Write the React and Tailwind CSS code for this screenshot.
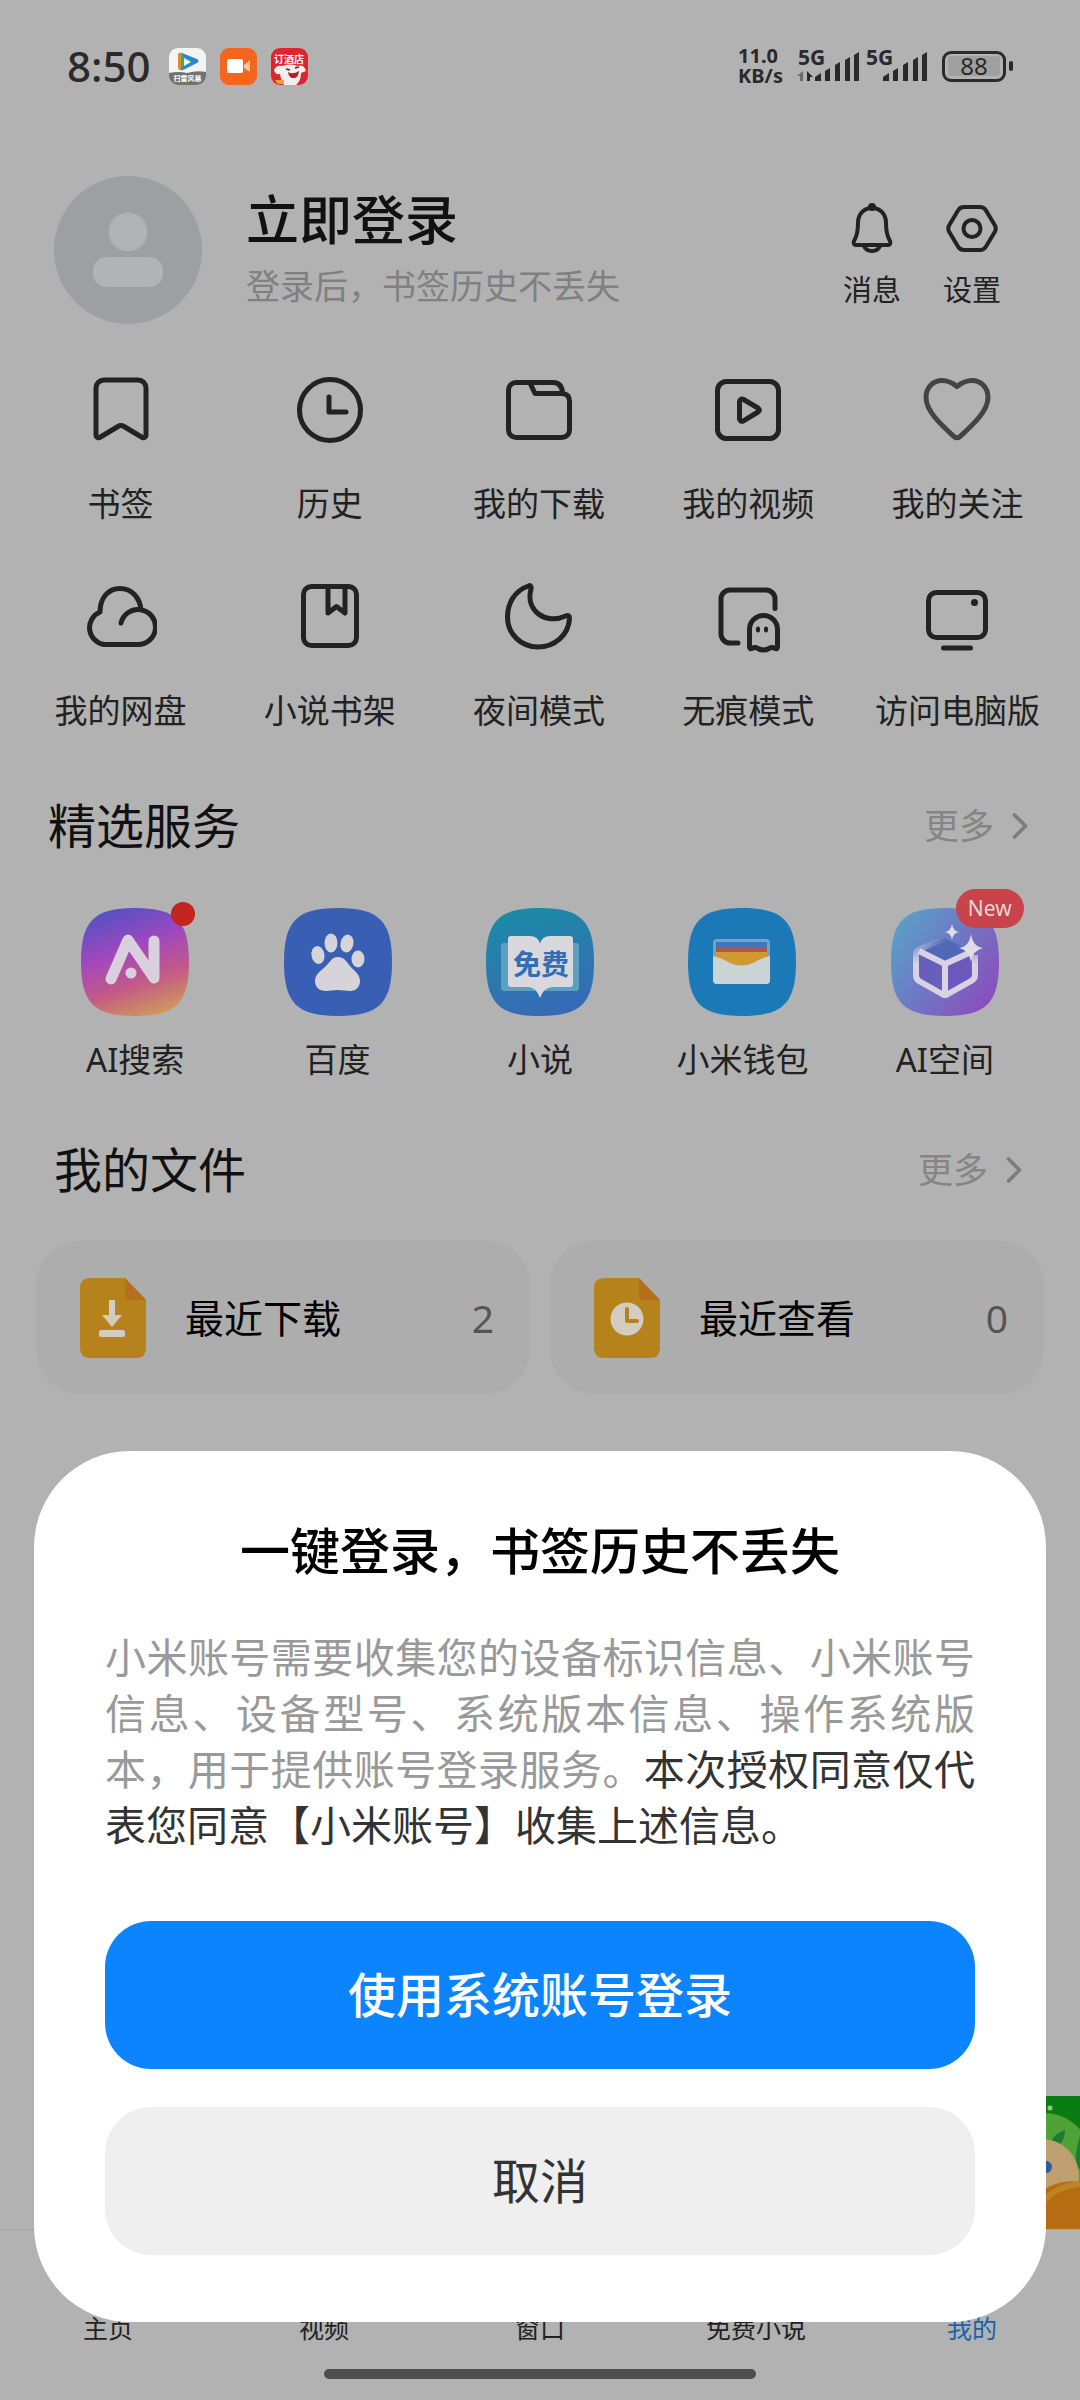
import React from 'react';
import clsx from 'clsx';
import { ChevronRight } from 'lucide-react';

// Shared wrapper for the 72px line icons of the tool grid
const LineIcon = ({ className, children }) => (
  <svg
    viewBox="0 0 72 72"
    className={clsx('w-[72px] h-[72px]', className || 'text-[#222]')}
    fill="none"
    stroke="currentColor"
    strokeWidth="5"
    strokeLinecap="round"
    strokeLinejoin="round"
    aria-hidden="true"
  >
    {children}
  </svg>
);

const tools = [
  {
    label: '书签',
    icon: (
      <LineIcon>
        <path d="M11 14a8 8 0 0 1 8-8h34a8 8 0 0 1 8 8v46.500c0 3-2.500 4-4.500 2.500L39 52.500q-3-2-6 0L15.500 63c-2 1.500-4.500.500-4.500-2.500Z" />
      </LineIcon>
    ),
  },
  {
    label: '历史',
    icon: (
      <LineIcon>
        <circle cx="36" cy="36" r="30.500" />
        <path d="M35 23v15h17" />
      </LineIcon>
    ),
  },
  {
    label: '我的下载',
    icon: (
      <LineIcon>
        <path d="M13 8.500h37q9 0 9.500 11 7 .500 7 8V56a7.500 7.500 0 0 1-7.500 7.500H13A7.500 7.500 0 0 1 5.500 56V16A7.500 7.500 0 0 1 13 8.500Z" />
        <path d="M27 9l5 10.500h27" />
      </LineIcon>
    ),
  },
  {
    label: '我的视频',
    icon: (
      <LineIcon>
        <rect x="5.500" y="7.500" width="61" height="57" rx="9" />
        <path d="M27.500 28v16.500c0 2.500 2 3.500 4 2.300L46 38q2.800-2 0-4L31.500 25.500c-2-1.200-4 0-4 2.500Z" />
      </LineIcon>
    ),
  },
  {
    label: '我的关注',
    icon: (
      <LineIcon className="text-[#444]">
        <path d="M36 12.500C31 8.500 26 6.500 21 6.500 12 6.500 5 13.500 5 23.500c0 14 16 28 28 39q3 2.500 6 0c12-11 28-25 28-39 0-10-7-17-16-17-5 0-10 2-15 6Z" />
      </LineIcon>
    ),
  },
  {
    label: '我的网盘',
    icon: (
      <LineIcon>
        <path d="M36 42a17.500 17.500 0 1 1 17 21.500H19A17 17 0 0 1 15 31C15 17 23 7.500 35 7.500S55 17 56 29" />
      </LineIcon>
    ),
  },
  {
    label: '小说书架',
    icon: (
      <LineIcon>
        <rect x="9.500" y="5.500" width="53" height="59" rx="8" />
        <path d="M34 6v26l8.500-6.500L51 32V6" />
      </LineIcon>
    ),
  },
  {
    label: '夜间模式',
    icon: (
      <LineIcon>
        <path d="M25.500 5C12 9.500 4.500 22 4.500 36 4.500 53 18 66 35 66c17 0 30.500-12 31.500-28.500.100-3-1.500-3.500-4-2.500C43 44 22 30 28 8c.500-2.500-.500-4-2.500-3Z" />
      </LineIcon>
    ),
  },
  {
    label: '无痕模式',
    icon: (
      <LineIcon>
        <path d="M63 27.500V18a9 9 0 0 0-9-9H18a9 9 0 0 0-9 9v35a9 9 0 0 0 9 9h8" />
        <path d="M37.500 66V48.500a14 14 0 0 1 28 0V66q0 2.500-2.500 1.500-3-2-6 0-2.500 1.500-5.500 1.500t-5.500-1.500q-3-2-6 0-2.500 1-2.500-1.500Z" />
        <path d="M46 47.500v2M54 47.500v2" strokeWidth="4" />
      </LineIcon>
    ),
  },
  {
    label: '访问电脑版',
    icon: (
      <LineIcon>
        <rect x="7.500" y="11.500" width="57" height="45" rx="8" />
        <circle cx="53.500" cy="21.500" r="3.500" fill="currentColor" stroke="none" />
        <path d="M22.500 67h27" />
      </LineIcon>
    ),
  },
];

const SQUIRCLE = 'M54 0C95 0 108 13 108 54S95 108 54 108 0 95 0 54 13 0 54 0Z';

const AiSearchLogo = () => (
  <svg viewBox="0 0 108 108" className="w-[108px] h-[108px]" aria-hidden="true">
    <defs>
      <linearGradient id="aiSearch" x1="0.3" y1="0" x2="0.65" y2="1">
        <stop offset="0" stopColor="#5450c4" />
        <stop offset="0.38" stopColor="#a048be" />
        <stop offset="0.7" stopColor="#c45a86" />
        <stop offset="1" stopColor="#cf975c" />
      </linearGradient>
    </defs>
    <path d={SQUIRCLE} fill="url(#aiSearch)" />
    <path d="M30 71L47 32L73 70V33" fill="none" stroke="#d9cfdd" strokeWidth="11" strokeLinecap="round" strokeLinejoin="round" />
    <circle cx="50" cy="65" r="5.500" fill="#d9cfdd" />
  </svg>
);

const BaiduLogo = () => (
  <svg viewBox="0 0 108 108" className="w-[108px] h-[108px]" aria-hidden="true">
    <path d={SQUIRCLE} fill="#385fb4" />
    <g fill="#d6d4d8">
      <ellipse cx="34" cy="47" rx="6.500" ry="9" transform="rotate(-10 34 47)" />
      <ellipse cx="47" cy="35" rx="6.500" ry="9.500" />
      <ellipse cx="63" cy="35.500" rx="6.500" ry="9" transform="rotate(12 63 35.500)" />
      <ellipse cx="74" cy="51" rx="6.500" ry="8.500" />
      <path d="M54 49c6 0 9 5 12 9 4 5 10 8 10 15 0 6-4 10-10 10-4 0-7-1-12-1s-8 1-12 1c-7 0-11-4-11-10 0-7 6-10 11-15 4-4 6-9 12-9Z" />
    </g>
  </svg>
);

const NovelLogo = () => (
  <svg viewBox="0 0 108 108" className="w-[108px] h-[108px]" aria-hidden="true">
    <defs>
      <linearGradient id="novel" x1="0.4" y1="0" x2="0.7" y2="1">
        <stop offset="0" stopColor="#1c8aa6" />
        <stop offset="1" stopColor="#3868b6" />
      </linearGradient>
    </defs>
    <path d={SQUIRCLE} fill="url(#novel)" />
    <path d="M15 38q0-3 3-3h72q3 0 3 3v42q0 3-3 3H18q-3 0-3-3Z" fill="#5d9fc0" />
    <path d="M22 31q0-3 3-3h19q8 0 10 8 2-8 10-8h20q3 0 3 3v45q0 3-3 3H67q-9 0-13 11-4-11-12-11H25q-3 0-3-3Z" fill="#d9d8dc" />
    <text x="55" y="67" textAnchor="middle" fontSize="28" fontWeight="700" fill="#2f6fb8">免费</text>
  </svg>
);

const WalletLogo = () => (
  <svg viewBox="0 0 108 108" className="w-[108px] h-[108px]" aria-hidden="true">
    <path d={SQUIRCLE} fill="#1c79b8" />
    <rect x="25" y="31" width="57" height="45" rx="4" fill="#6fa6c8" />
    <path d="M28 34h51v5H28Z" fill="#3f78b4" />
    <path d="M28 39h51v5H28Z" fill="#a8584c" />
    <path d="M28 44h51v14H28Z" fill="#d19a2e" />
    <path d="M25 48c8 2 12 4 17 7q12 5 23 0c5-3 9-5 17-7v24q0 4-4 4H29q-4 0-4-4Z" fill="#ccd3d4" />
  </svg>
);

const AiSpaceLogo = () => (
  <svg viewBox="0 0 108 108" className="w-[108px] h-[108px]" aria-hidden="true">
    <defs>
      <linearGradient id="aiSpace" x1="0" y1="0.1" x2="1" y2="0.8">
        <stop offset="0" stopColor="#58a4c8" />
        <stop offset="0.5" stopColor="#6e78c4" />
        <stop offset="1" stopColor="#8c4cbc" />
      </linearGradient>
      <linearGradient id="cubeEdge" x1="0" y1="0" x2="0" y2="1">
        <stop offset="0" stopColor="#d8d2e2" stopOpacity="0" />
        <stop offset="0.45" stopColor="#d8d2e2" />
      </linearGradient>
    </defs>
    <path d={SQUIRCLE} fill="url(#aiSpace)" />
    <path d="M28 42L54 30L81 44L54 55Z" fill="#5068b8" />
    <path d="M28 44L54 57V86L27 71Z" fill="#6660bc" />
    <path d="M80 45L54 57V86L81 71Z" fill="#6a58bc" />
    <path d="M54 30L29 41q-4 2-4 6v20q0 4 3 6l23 13q3 2 6 0l23-13q4-2 4-6V47" fill="none" stroke="url(#cubeEdge)" strokeWidth="6" strokeLinejoin="round" />
    <path d="M28 43L54 56L78 45M54 56V86" fill="none" stroke="#d8d2e2" strokeWidth="6" />
    <path d="M80 26q2 13 12 14-10 2-12 14-2-12-12-14 10-1 12-14ZM61 16q1 7 7 8-6 1-7 8-1-7-7-8 6-1 7-8Z" fill="#e2dce6" />
  </svg>
);

const services = [
  { label: 'AI搜索', logo: <AiSearchLogo />, dot: true },
  { label: '百度', logo: <BaiduLogo /> },
  { label: '小说', logo: <NovelLogo /> },
  { label: '小米钱包', logo: <WalletLogo /> },
  { label: 'AI空间', logo: <AiSpaceLogo />, badge: 'New' },
];

const FileIcon = ({ children }) => (
  <svg viewBox="0 0 66 80" className="w-[66px] h-[80px]" aria-hidden="true">
    <path d="M10 0h35l21 22v48q0 10-10 10H10Q0 80 0 70V10Q0 0 10 0Z" fill="#b6821c" />
    <path d="M45 0l21 22H51q-6 0-6-6Z" fill="#b4701c" />
    {children}
  </svg>
);

const files = [
  {
    label: '最近下载',
    count: 2,
    icon: (
      <FileIcon>
        <path d="M29 22h6v15h7L32 49 22 37h7ZM21 52h22q2 0 2 2v3q0 2-2 2H21q-2 0-2-2v-3q0-2 2-2Z" fill="#d2cdc2" />
      </FileIcon>
    ),
  },
  {
    label: '最近查看',
    count: 0,
    icon: (
      <FileIcon>
        <circle cx="33" cy="41" r="16.500" fill="#d2cdc2" />
        <path d="M33 31v12h10" fill="none" stroke="#b6821c" strokeWidth="4" strokeLinecap="round" strokeLinejoin="round" />
      </FileIcon>
    ),
  },
];

const tabs = ['主页', '视频', '窗口', '免费小说', '我的'];

const Signal = ({ activity }) => (
  <svg viewBox="-2 -10 64 56" className="w-[64px] h-[56px]" fill="#2a2a2a" aria-hidden="true">
    <text x="0" y="17" fontSize="21" fontWeight="700">5G</text>
    {activity && (
      <>
        <path d="M-1 28l6-5v10H2v-5Z" fill="#6a6a6a" />
        <path d="M9 33V23l6 6h-3v4Z" />
      </>
    )}
    <path d="M17 33v-4l6-4v8ZM27 33V23l5-3v13ZM37 33V17l5-3v19ZM47 33V12l5-3v24ZM56 33V7l5-3v29Z" />
  </svg>
);

const StatusBar = () => (
  <div className="flex items-center h-[132px] px-[67px] text-[#2a2a2a]">
    <span className="text-[42px] leading-[48px] font-medium">8:50</span>
    <div className="flex gap-[14px] ml-[18px]">
      <svg viewBox="0 0 37 37" className="w-[37px] h-[37px]" aria-hidden="true">
        <rect width="37" height="37" rx="9" fill="#f2f5f3" />
        <path d="M0 25q10-2 18 0 10-3 19-1v4a9 9 0 0 1-9 9H9a9 9 0 0 1-9-9Z" fill="#70746f" />
        <path d="M9 8q0-4 4-3l15 6q3 2 0 4L14 22q-4 1-5-3Z" fill="#2a86d8" />
        <path d="M9 8q0-4 4-3l-1 17q-3 0-3-3Z" fill="#e08a2c" />
        <path d="M12 8l11 5-11 7Z" fill="#35b54a" />
        <path d="M15 10l7 4-7 4Z" fill="#f4f8f2" />
        <text x="18.500" y="33" textAnchor="middle" fontSize="7" fontWeight="700" fill="#fff">扫雷风暴</text>
      </svg>
      <svg viewBox="0 0 37 37" className="w-[37px] h-[37px]" aria-hidden="true">
        <rect width="37" height="37" rx="9" fill="#f4651d" />
        <rect x="7" y="11" width="16" height="14" rx="2" fill="#fff" />
        <path d="M24 17l6-5v12l-6-4Z" fill="#fbc3a6" />
      </svg>
      <svg viewBox="0 0 37 37" className="w-[37px] h-[37px]" aria-hidden="true">
        <rect width="37" height="37" rx="9" fill="#e0242e" />
        <text x="18" y="15" textAnchor="middle" fontSize="10" fontWeight="700" fill="#fff">订酒店</text>
        <path d="M3 22q2-5 8-4 8-3 15 0 7-2 9 5l-5 2q0 8-5 12H13q-3-4-4-11-5 1-6-4Z" fill="#f3eeee" />
        <path d="M17 24q5 3 11-1-1 8-6 7-4 0-5-6Z" fill="#b01f2a" />
        <path d="M15 21l4 1M24 20l4-1" stroke="#333" strokeWidth="1.500" />
        <path d="M4 32h9v4H8q-3-1-4-4Z" fill="#e8a33a" />
      </svg>
    </div>
    <div className="flex items-center gap-1 ml-auto">
      <div className="w-[54px] text-[20px] leading-[20px] font-bold">
        <p>11.0</p>
        <p>KB/s</p>
      </div>
      <Signal activity />
      <Signal />
      <div className="flex items-center gap-[3px] ml-[10px]">
        <div className="flex items-center w-[64px] h-[31px] p-[3px] border-[3px] border-[#2a2a2a] rounded-[9px]">
          <span className="w-full rounded-[3px] bg-[#a0a0a0] text-[24px] leading-[20px] text-center">88</span>
        </div>
        <span className="w-1 h-[10px] rounded-full bg-[#2a2a2a]" />
      </div>
    </div>
  </div>
);

const SectionHeader = ({ title, className }) => (
  <div className={clsx('flex items-center justify-between', className)}>
    <h2 className="text-[48px] leading-[72px] font-normal text-[#111]">{title}</h2>
    <a href="#more" className="flex items-center gap-1 text-[35px] leading-[44px] text-[#858585]">
      更多
      <ChevronRight className="w-11 h-11 -mr-3 text-[#7c7c7c]" />
    </a>
  </div>
);

const LoginDialog = () => (
  <div className="absolute inset-0 flex items-end px-[34px] pb-[78px]">
    <div
      role="dialog"
      aria-modal="true"
      aria-labelledby="login-title"
      className="w-full px-[71px] pt-16 pb-[67px] rounded-[96px] bg-white"
    >
      <h1 id="login-title" className="text-center text-[50px] leading-[72px] font-medium text-black">
        一键登录，书签历史不丢失
      </h1>
      <p className="mt-[42px] text-[41px] leading-[56px] text-justify text-[#999]">
        小米账号需要收集您的设备标识信息、小米账号信息、设备型号、系统版本信息、操作系统版本，用于提供账号登录服务。
        <span className="text-[#333]">本次授权同意仅代表您同意【小米账号】收集上述信息。</span>
      </p>
      <button className="w-full mt-[68px] py-[38px] rounded-[46px] bg-[#0d84ff] text-[48px] leading-[72px] font-medium text-white">
        使用系统账号登录
      </button>
      <button className="w-full mt-[38px] py-[38px] rounded-[46px] bg-[#efefef] text-[48px] leading-[72px] font-normal text-[#333]">
        取消
      </button>
    </div>
  </div>
);

const App = () => {
  return (
    <div
      lang="zh-CN"
      className="relative flex flex-col min-h-screen overflow-hidden bg-[#b2b2b2] text-[#222] font-['Noto_Sans','Noto_Sans_CJK_SC',sans-serif]"
    >
      <StatusBar />

      <main>
        {/* Profile */}
        <header className="flex items-start mt-11 pl-[54px] pr-[79px]">
          <svg viewBox="0 0 148 148" className="w-[148px] h-[148px]" aria-hidden="true">
            <circle cx="74" cy="74" r="74" fill="#9e9fa3" />
            <circle cx="74" cy="56" r="19.500" fill="#b1b2b4" />
            <rect x="39" y="81" width="70" height="30" rx="14" fill="#b1b3b4" />
          </svg>
          <div className="pt-2 ml-11">
            <h2 className="text-[53px] leading-[72px] font-medium text-[#111]">立即登录</h2>
            <p className="mt-2 text-[34px] leading-[44px] text-[#808080]">登录后，书签历史不丢失</p>
          </div>
          <div className="flex gap-[42px] pt-6 ml-auto">
            <button className="flex flex-col items-center w-[58px] gap-[14px] text-[29px] leading-[40px]">
              <svg viewBox="0 0 56 56" className="w-14 h-14" fill="none" stroke="currentColor" strokeWidth="4" strokeLinecap="round" strokeLinejoin="round" aria-hidden="true">
                <path d="M28 8c-9 0-14 7-14 15 0 9-1 13-4 18-1 2 0 4 2 4h32c2 0 3-2 2-4-3-5-4-9-4-18 0-8-5-15-14-15Z" />
                <path d="M20 46q2 5 8 5t8-5" />
                <circle cx="28" cy="7" r="2" fill="currentColor" />
              </svg>
              消息
            </button>
            <button className="flex flex-col items-center w-[58px] gap-[14px] text-[29px] leading-[40px]">
              <svg viewBox="0 0 56 56" className="w-14 h-14" fill="none" stroke="currentColor" strokeWidth="4" strokeLinejoin="round" aria-hidden="true">
                <path d="M20 7h16q4 0 6 3.500l9 15q1.500 3 0 6l-9 15Q40 50 36 50H20q-4 0-6-3.500l-9-15q-1.500-3 0-6l9-15Q16 7 20 7Z" />
                <circle cx="28" cy="28.500" r="8.500" />
              </svg>
              设置
            </button>
          </div>
        </header>

        {/* Tools */}
        <div className="grid grid-cols-5 gap-y-[55px] mt-[50px] pl-4 pr-[18px]">
          {tools.map((tool) => (
            <button key={tool.label} className="flex flex-col items-center gap-9 text-[33px] leading-[44px] whitespace-nowrap">
              {tool.icon}
              {tool.label}
            </button>
          ))}
        </div>

        {/* Services */}
        <SectionHeader title="精选服务" className="mt-[57px] pl-12 pr-[50px]" />
        <div className="grid grid-cols-5 mt-[46px] px-[34px]">
          {services.map((service) => (
            <button key={service.label} className="flex flex-col items-center gap-[22px] text-[33px] leading-[44px] whitespace-nowrap">
              <span className="relative">
                {service.logo}
                {service.dot && <span className="absolute -top-[6px] -right-[6px] w-6 h-6 rounded-full bg-[#c4241f]" />}
                {service.badge && (
                  <span className="absolute -top-[19px] -right-[25px] w-[68px] rounded-full bg-[#c8444a] text-center text-[21px] leading-[39px] text-[#e6d4d6]">
                    {service.badge}
                  </span>
                )}
              </span>
              {service.label}
            </button>
          ))}
        </div>

        {/* Files */}
        <SectionHeader title="我的文件" className="mt-[52px] pl-[54px] pr-14" />
        <div className="grid grid-cols-2 gap-5 mt-[35px] px-9">
          {files.map((file) => (
            <button key={file.label} className="flex items-center h-[153px] pl-11 pr-9 rounded-[44px] bg-[#adadad]">
              {file.icon}
              <span className="ml-[39px] text-[39px] leading-[56px] text-black">{file.label}</span>
              <span className="ml-auto text-[39px] leading-[56px] text-[#555]">{file.count}</span>
            </button>
          ))}
        </div>
      </main>

      {/* Floating promo, mostly behind the dialog */}
      <svg viewBox="0 0 60 133" className="absolute right-0 bottom-[171px] w-[60px] h-[133px]" aria-hidden="true">
        <rect width="60" height="133" fill="#0a7d12" />
        <ellipse cx="24" cy="71" rx="50" ry="54" fill="#4fa336" />
        <path d="M60 72V40q-6 18-4 36Z" fill="#1a7f30" />
        <path d="M31 46q4-9 14-12 0 10-6 15Z" fill="#1f7a34" />
        <circle cx="22" cy="80" r="37" fill="#bf9f70" />
        <circle cx="26" cy="71" r="6" fill="#2c5d96" />
        <path d="M0 113q30-32 60-27v47H0Z" fill="#b56c12" />
        <path d="M20 108q16-18 40-20" fill="none" stroke="#bd8424" strokeWidth="6" />
        <circle cx="30" cy="12" r="2.500" fill="#9cc48a" />
      </svg>

      <footer className="mt-auto border-t border-[#a4a4a4]">
        <nav className="grid grid-cols-5 pt-20 text-[25px] leading-[36px] text-center">
          {tabs.map((tab) => (
            <a key={tab} href={`#${tab}`} className={tab === '我的' ? 'text-[#1b62ac]' : 'text-[#222]'}>
              {tab}
            </a>
          ))}
        </nav>
        <div className="w-2/5 h-[10px] mx-auto mt-[23px] mb-[21px] rounded-full bg-[#4e4e4e]" />
      </footer>

      <LoginDialog />
    </div>
  );
};

export default App;
